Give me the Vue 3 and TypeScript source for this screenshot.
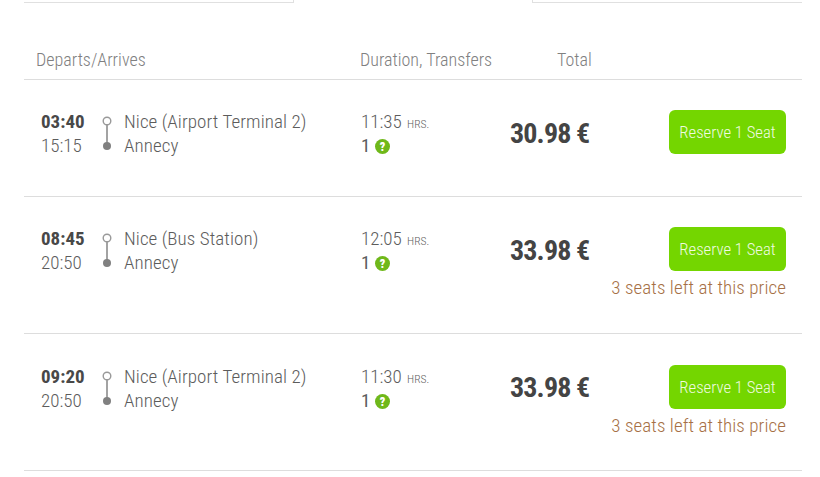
<script setup lang="ts">
interface Trip { dep: string; arr: string; from: string; dur: string; price: string; low: boolean }
const trips: Trip[] = [
  { dep: '03:40', arr: '15:15', from: 'Nice (Airport Terminal 2)', dur: '11:35', price: '30.98 €', low: false },
  { dep: '08:45', arr: '20:50', from: 'Nice (Bus Station)', dur: '12:05', price: '33.98 €', low: true },
  { dep: '09:20', arr: '20:50', from: 'Nice (Airport Terminal 2)', dur: '11:30', price: '33.98 €', low: true },
]
</script>

<template>
  <div class="page">
    <div class="tabs">
      <div class="tab"></div>
      <div class="tab"></div>
    </div>
    <div class="head">
      <span class="h-dep">Departs/Arrives</span>
      <span class="h-dur">Duration, Transfers</span>
      <span class="h-total">Total</span>
    </div>
    <div v-for="t in trips" :key="t.dep" class="row" :class="{ tall: t.low }">
      <div class="times">
        <b>{{ t.dep }}</b>
        <span>{{ t.arr }}</span>
      </div>
      <svg class="line" width="12" height="38" viewBox="0 0 12 38">
        <circle cx="6" cy="5" r="3.8" fill="#fff" stroke="#999" stroke-width="1.4" />
        <path d="M6 9V29" stroke="#999" stroke-width="1.8" />
        <circle cx="6" cy="30" r="4" fill="#808080" />
      </svg>
      <div class="places">
        <span>{{ t.from }}</span>
        <span>Annecy</span>
      </div>
      <div class="dur">
        <span class="d1">{{ t.dur }} <small>HRS.</small></span>
        <span class="d2">1
          <svg class="q" width="15" height="15" viewBox="0 0 15 15">
            <circle cx="7.5" cy="7.5" r="7.5" fill="#6fb81a" />
            <text x="7.5" y="11.6" text-anchor="middle" class="qt">?</text>
          </svg>
        </span>
      </div>
      <div class="price">{{ t.price }}</div>
      <div class="cta">
        <button class="btn">Reserve 1 Seat</button>
        <div v-if="t.low" class="left">3 seats left at this price</div>
      </div>
    </div>
  </div>
</template>

<style>
html, body { margin: 0; background: #fff; }
</style>

<style scoped>
.page {
  width: 778px;
  margin-left: 24px;
  height: 477px;
  overflow: hidden;
  font-family: Roboto, "Liberation Sans", sans-serif;
  font-stretch: 75%;
  font-weight: 300;
  color: #5c5c5c;
  font-size: 19px;
}
.tabs { display: flex; justify-content: space-between; height: 3px; }
.tab { width: 270px; border-bottom: 1px solid #e0e0e0; border-right: 1px solid #e0e0e0; box-sizing: border-box; }
.tab:last-child { border-right: 0; border-left: 1px solid #e0e0e0; }
.head {
  display: flex;
  height: 77px;
  box-sizing: border-box;
  border-bottom: 1px solid #ddd;
  padding-top: 45.5px;
  color: #808080;
  font-size: 18px;
  line-height: 22px;
}
.h-dep { margin-left: 12px; width: 324px; }
.h-dur { width: 197px; white-space: nowrap; }
.h-total { width: 34px; white-space: nowrap; }
.row {
  display: flex;
  align-items: flex-start;
  height: 117px;
  box-sizing: border-box;
  border-bottom: 1px solid #ddd;
  padding-top: 30px;
}
.row.tall { height: 137px; }
.row:last-child { padding-top: 31px; }
.times { margin-left: 17px; width: 44px; display: flex; flex-direction: column; line-height: 24px; }
.times b { font-weight: 700; font-size: 19px; color: #484848; }
.line { margin: 6px 0 0 16px; }
.places { margin-left: 11px; width: 237px; display: flex; flex-direction: column; line-height: 24px; white-space: nowrap; letter-spacing: 0.08px; }
.dur { width: 149px; display: flex; flex-direction: column; line-height: 24px; }
.d1 { white-space: nowrap; }
.d1 small { font-size: 11.5px; line-height: 1; margin-left: 1px; }
.d2 { display: flex; align-items: center; gap: 5px; font-weight: 400; }
.q { display: block; }
.qt { font-size: 12px; font-weight: 900; fill: #fff; font-family: Roboto, sans-serif; }
.price { width: 82px; margin-top: 8px; font-size: 28px; letter-spacing: -0.85px; font-weight: 700; color: #444; line-height: 32px; white-space: nowrap; }
.row:last-child .price { margin-top: 7px; }
.cta { flex: 1; margin-right: 16px; display: flex; flex-direction: column; align-items: flex-end; }
.btn {
  width: 117px;
  height: 44px;
  padding: 0;
  border: 0;
  border-radius: 6px;
  background: #74d600;
  color: #f0fbe0;
  font: inherit;
  font-size: 16.7px;
}
.left { margin-top: 5px; color: #a66f45; font-size: 19px; line-height: 24px; white-space: nowrap; letter-spacing: 0.08px; }
</style>
